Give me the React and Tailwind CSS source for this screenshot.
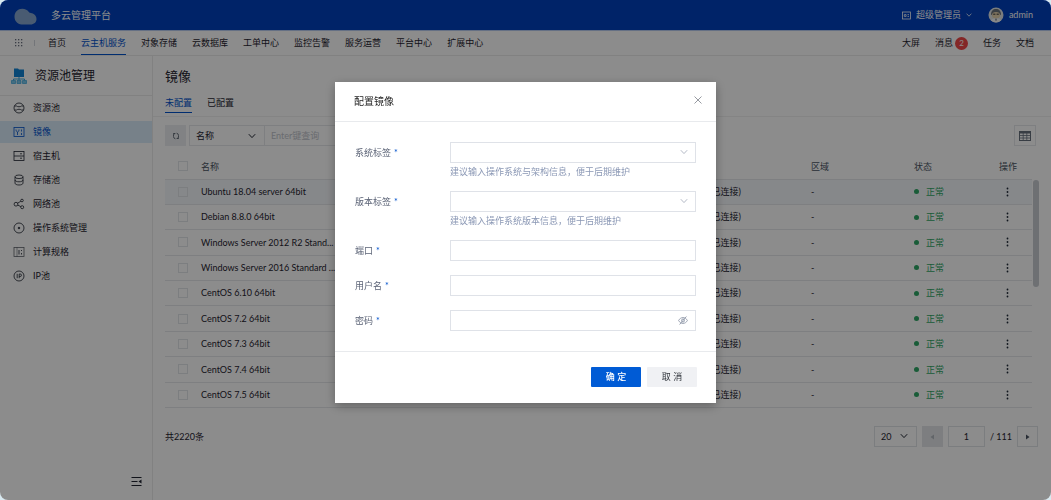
import { useState } from "react";

const leftNav = [
  "首页",
  "云主机服务",
  "对象存储",
  "云数据库",
  "工单中心",
  "监控告警",
  "服务运营",
  "平台中心",
  "扩展中心",
];

const rightNav = [
  { label: "大屏" },
  { label: "消息", badge: 2 },
  { label: "任务" },
  { label: "文档" },
];

const sideMenu = [
  { label: "资源池", icon: "pool" },
  { label: "镜像", icon: "image" },
  { label: "宿主机", icon: "host" },
  { label: "存储池", icon: "storage" },
  { label: "网络池", icon: "network" },
  { label: "操作系统管理", icon: "system" },
  { label: "计算规格", icon: "spec" },
  { label: "IP池", icon: "ip" },
];

const images = [
  "Ubuntu 18.04 server 64bit",
  "Debian 8.8.0 64bit",
  "Windows Server 2012 R2 Stand...",
  "Windows Server 2016 Standard ...",
  "CentOS 6.10 64bit",
  "CentOS 7.2 64bit",
  "CentOS 7.3 64bit",
  "CentOS 7.4 64bit",
  "CentOS 7.5 64bit",
];

const fields = [
  {
    id: "osTag",
    label: "系统标签",
    type: "select",
    hint: "建议输入操作系统与架构信息，便于后期维护",
  },
  {
    id: "versionTag",
    label: "版本标签",
    type: "select",
    hint: "建议输入操作系统版本信息，便于后期维护",
  },
  { id: "port", label: "端口", type: "text" },
  { id: "username", label: "用户名", type: "text" },
  { id: "password", label: "密码", type: "password" },
];

const iconPaths = {
  pool: (
    <>
      <circle cx="6" cy="6" r="5" />
      <path d="M1.500 4h2c1.200 1 3.800 1 5 0h2M1.500 8h2c1.200-1 3.800-1 5 0h2" />
    </>
  ),
  image: (
    <>
      <rect x="1" y="1.500" width="10" height="9" />
      <path d="M3 3.500v1.200l1.500 1.300v3M6 3.500v1.200L4.500 6M8.500 3.500v2M8.500 7v2" />
    </>
  ),
  host: (
    <>
      <rect x="1" y="1.500" width="10" height="9" />
      <path d="M1 6h10M7 3.800h2M7 8.200h2" />
    </>
  ),
  storage: (
    <>
      <ellipse cx="6" cy="2.800" rx="4" ry="1.800" />
      <path d="M2 2.800v6.400c0 1 1.800 1.800 4 1.800s4-.8 4-1.800V2.800M2 6c0 1 1.800 1.800 4 1.800S10 7 10 6" />
    </>
  ),
  network: (
    <>
      <circle cx="3" cy="6.200" r="1.900" />
      <circle cx="9" cy="2.500" r="1.300" />
      <circle cx="9.200" cy="9.200" r="1.500" />
      <path d="M4.600 5.200 7.900 3.200M4.700 7.100l3.200 1.500" />
    </>
  ),
  system: (
    <>
      <circle cx="6" cy="6" r="5" />
      <circle cx="6" cy="6" r="0.800" fill="currentColor" />
    </>
  ),
  spec: (
    <>
      <rect x="1" y="1.500" width="10" height="9" opacity="0.7" />
      <path d="M4 1.500v9" opacity="0.5" />
      <path d="M6 4v4.500M8.500 4v1M8.500 7v1.500" />
    </>
  ),
  ip: (
    <>
      <circle cx="6" cy="6" r="5" />
      <path d="M4.200 3.800v4.400M6.200 8.200V4h1a1.200 1.200 0 0 1 0 2.500h-1" />
    </>
  ),
};

function MenuIcon({ name }) {
  return (
    <svg
      viewBox="0 0 12 12"
      className="size-3 shrink-0"
      fill="none"
      stroke="currentColor"
      strokeWidth="0.8"
    >
      {iconPaths[name]}
    </svg>
  );
}

function Chevron({ className }) {
  return (
    <svg
      viewBox="0 0 8 8"
      className={className}
      fill="none"
      stroke="currentColor"
      strokeWidth="1"
    >
      <path d="M0.800 2.200 4 5.600 7.200 2.200" />
    </svg>
  );
}

function TopBar() {
  return (
    <header className="flex h-[30px] items-center justify-between bg-[#0041bd] pr-[18px] pl-[14px] text-white">
      <div className="flex items-center gap-[14px]">
        <svg viewBox="0 0 23 17" className="mt-[3px] h-[17px] w-[23px]">
          <path
            d="M7.500 16.500C3.500 16.200.5 13 .5 8.800.5 4 4 .8 8.200.8c3 0 5.400 1.300 7 3.600 1 .5 2.300.6 3.600 1.200 2.300 1 3.700 3 3.700 5.400 0 3.200-2.500 5.500-6 5.500z"
            fill="#86a6cf"
          />
        </svg>
        <span className="text-[10px]">多云管理平台</span>
      </div>
      <div className="flex items-center gap-4">
        <button type="button" className="flex items-center gap-[5px]">
          <svg
            viewBox="0 0 9 9"
            className="size-[9px]"
            fill="none"
            stroke="currentColor"
            strokeWidth="0.8"
          >
            <rect x="0.500" y="1" width="8" height="7" />
            <path d="M2.300 3.600h1.800v1.800H2.300zM5.500 3.600h1.500M5.500 5.400h1.500" />
          </svg>
          <span>超级管理员</span>
          <Chevron className="size-[6px]" />
        </button>
        <button type="button" className="flex items-center gap-[5px]">
          <svg viewBox="0 0 16 16" className="size-4">
            <circle cx="8" cy="8" r="7.500" fill="#dfe3e6" />
            <path d="M3 7.500C3 4 5 2 8 2s5 2 5 5.500l-1.500 1h-7z" fill="#6a737c" />
            <ellipse cx="8" cy="8.200" rx="4" ry="3.200" fill="#e6d3ae" />
            <path d="M5.200 7.200h2.200M8.600 7.200h2.200" stroke="#333" strokeWidth="1" />
            <path d="M3 13.600c1-2 2.800-2.200 5-2.200s4 .2 5 2.200a7.500 7.500 0 0 1-10 0z" fill="#f5f7f9" />
            <path d="M7.600 11.400h.8l.3 2.200H7.300z" fill="#55606b" />
          </svg>
          <span>admin</span>
        </button>
      </div>
    </header>
  );
}

function NavBar() {
  return (
    <nav className="flex h-[26px] items-stretch justify-between border-t border-b border-t-[#b9cdf0] border-b-[#ececec] pr-[17px] pl-[15px]">
      <div className="flex items-stretch gap-[13px]">
        <button type="button" aria-label="全部服务" className="flex items-center gap-[11px]">
          <svg viewBox="0 0 8 8" className="size-2" fill="#6b7280">
            {[0, 3, 6].map((y) =>
              [0, 3, 6].map((x) => (
                <rect key={`${x}-${y}`} x={x} y={y} width="1.300" height="1.300" />
              ))
            )}
          </svg>
          <span className="h-[6px] w-px bg-gray-300" />
        </button>
        <div className="flex items-stretch gap-[15px]">
          {leftNav.map((item) => (
            <a
              key={item}
              href="#"
              className={
                item === "云主机服务"
                  ? "flex items-center border-b border-[#0052cc] text-[#0052cc]"
                  : "flex items-center border-b border-transparent"
              }
            >
              {item}
            </a>
          ))}
        </div>
      </div>
      <div className="flex items-stretch gap-[15px]">
        {rightNav.map((item) => (
          <a key={item.label} href="#" className="flex items-center gap-[2px]">
            {item.label}
            {item.badge && (
              <span className="flex size-[13px] items-center justify-center rounded-full bg-[#f04848] text-[8px] text-white">
                {item.badge}
              </span>
            )}
          </a>
        ))}
      </div>
    </nav>
  );
}

function Sidebar() {
  return (
    <aside className="flex w-[153px] shrink-0 flex-col border-r border-[#ececec]">
      <div className="flex h-[40px] items-center gap-2 border-b border-[#ececec] pl-[11px]">
        <svg viewBox="0 0 16 16" className="size-4">
          <path d="M3 .5h4l1 1h5v7.500H3z" fill="#1283d6" />
          <path d="M8 9v3M2.500 12.500V11h11v1.500" stroke="#38a7e0" fill="none" />
          <path
            d="M.5 12.500h4v3h-4zM6 12.500h4v3H6zM11.500 12.500h4v3h-4z"
            fill="#7cc6ea"
            stroke="#38a7e0"
            strokeWidth="0.700"
          />
        </svg>
        <h2 className="text-[12px]">资源池管理</h2>
      </div>
      <ul className="flex flex-1 flex-col gap-[2px] pt-px">
        {sideMenu.map((item) => (
          <li key={item.label}>
            <a
              href="#"
              className={
                item.label === "镜像"
                  ? "flex h-[22px] items-center gap-2 bg-[#d9ebfa] pl-[13px] text-[#0052cc]"
                  : "flex h-[22px] items-center gap-2 pl-[13px]"
              }
            >
              <MenuIcon name={item.icon} />
              {item.label}
            </a>
          </li>
        ))}
      </ul>
      <button type="button" aria-label="收起菜单" className="mr-[10px] mb-[13px] self-end">
        <svg
          viewBox="0 0 11 11"
          className="size-[11px]"
          fill="none"
          stroke="currentColor"
          strokeWidth="1"
        >
          <path d="M.5 1.500h10M.5 5.500h6M.5 9.500h10" />
          <path d="M10.500 3.500v4l-3-2z" fill="currentColor" stroke="none" />
        </svg>
      </button>
    </aside>
  );
}

function Toolbar() {
  return (
    <div className="flex items-center justify-between pt-2 pr-[15px]">
      <div className="flex items-center gap-[3px]">
        <button
          type="button"
          aria-label="刷新"
          className="flex size-[21px] items-center justify-center bg-[#ebedf0]"
        >
          <svg
            viewBox="0 0 8 8"
            className="size-2"
            fill="none"
            stroke="#5b6470"
            strokeWidth="0.900"
          >
            <path d="M3.400 6.800A2.300 2.300 0 0 1 1.500 4.500V3A1.500 1.500 0 0 1 3 1.500M4.600 1.200A2.300 2.300 0 0 1 6.500 3.500V5A1.500 1.500 0 0 1 5 6.500M1.200 1.500H3.400M4.600 6.500h2.200" />
          </svg>
        </button>
        <div className="flex h-[21px] w-[260px] border border-[#e6e8eb]">
          <div className="relative w-[75px] border-r border-[#e6e8eb]">
            <select aria-label="查询字段" className="h-full w-full appearance-none pl-[6px]">
              <option>名称</option>
            </select>
            <Chevron className="pointer-events-none absolute top-[6px] right-2 size-2" />
          </div>
          <input
            aria-label="查询"
            placeholder="Enter键查询"
            className="min-w-0 flex-1 px-[6px] placeholder:text-[#bfc4cc]"
          />
        </div>
      </div>
      <button
        type="button"
        aria-label="列设置"
        className="flex h-[21px] w-[22px] items-center justify-center border border-[#e6e8eb]"
      >
        <svg viewBox="0 0 12 10" className="h-[10px] w-3" fill="none" stroke="#66707d">
          <rect x="0.500" y="0.500" width="11" height="9" />
          <path d="M.5 1.500h11" strokeWidth="2" />
          <path d="M.5 4.500h11M.5 7h11M4.200 2v7.500M7.800 2v7.500" strokeWidth="0.800" />
        </svg>
      </button>
    </div>
  );
}

function ImageTable() {
  const checkbox = (label) => (
    <input
      type="checkbox"
      aria-label={label}
      className="block size-[10px] appearance-none border border-[#e2e5e9]"
    />
  );

  return (
    <div className="flex gap-px pt-2 pr-3">
      <table className="h-[254px] flex-1 table-fixed border-collapse text-left">
        <colgroup>
          <col className="w-[36px]" />
          <col />
          <col className="w-[102px]" />
          <col className="w-[103px]" />
          <col className="w-[85px]" />
          <col className="w-[33px]" />
        </colgroup>
        <thead>
          <tr className="h-[25px] border-b border-[#e6e8eb] text-[#4b5563]">
            <th className="pl-[13px]">{checkbox("全选")}</th>
            <th className="font-normal">名称</th>
            <th />
            <th className="font-normal">区域</th>
            <th className="font-normal">状态</th>
            <th className="font-normal">操作</th>
          </tr>
        </thead>
        <tbody>
          {images.map((name, i) => (
            <tr
              key={name}
              className={
                i === 0
                  ? "border-b border-[#e6e8eb] bg-[#f5f8fc]"
                  : "border-b border-[#e6e8eb]"
              }
            >
              <td className="pl-[13px]">{checkbox(name)}</td>
              <td>{name}</td>
              <td>(已连接)</td>
              <td>-</td>
              <td className="text-[#2fa866]">
                <span className="flex items-center gap-[7px]">
                  <span className="size-[5px] rounded-full bg-[#2fa866]" />
                  正常
                </span>
              </td>
              <td>
                <button type="button" aria-label="操作" className="block pl-[7px]">
                  <svg viewBox="0 0 3 10" className="h-[10px] w-[3px]" fill="#1f2937">
                    <circle cx="1.500" cy="1.500" r="0.900" />
                    <circle cx="1.500" cy="5" r="0.900" />
                    <circle cx="1.500" cy="8.500" r="0.900" />
                  </svg>
                </button>
              </td>
            </tr>
          ))}
        </tbody>
      </table>
      <div className="mt-[26px] h-[107px] w-[6px] rounded-full bg-[#c9ccd1]" />
    </div>
  );
}

function Pagination() {
  return (
    <div className="flex items-center justify-between pt-[18px] pr-[13px]">
      <span>共2220条</span>
      <div className="flex h-[21px] items-stretch gap-[5px]">
        <div className="relative w-[43px]">
          <select
            aria-label="每页条数"
            className="h-full w-full appearance-none border border-[#e0e3e7] pl-[6px]"
          >
            <option>20</option>
          </select>
          <Chevron className="pointer-events-none absolute top-[6px] right-[9px] size-2" />
        </div>
        <button
          type="button"
          aria-label="上一页"
          disabled
          className="flex w-[21px] items-center justify-center bg-[#e3e6e9]"
        >
          <svg viewBox="0 0 4 6" className="h-[6px] w-1" fill="#b3b9c0">
            <path d="M4 .5v5L.5 3z" />
          </svg>
        </button>
        <input
          aria-label="页码"
          defaultValue="1"
          className="w-[37px] border border-[#e0e3e7] text-center"
        />
        <span className="flex items-center">/ 111</span>
        <button
          type="button"
          aria-label="下一页"
          className="flex w-[21px] items-center justify-center border border-[#e0e3e7]"
        >
          <svg viewBox="0 0 4 6" className="h-[6px] w-1" fill="#4b5563">
            <path d="M0 .5v5L3.500 3z" />
          </svg>
        </button>
      </div>
    </div>
  );
}

function FieldControl({ field }) {
  const box = "h-[21px] w-full border border-[#dfe2e8] bg-white px-2";

  if (field.type === "select") {
    return (
      <div className="relative">
        <select id={field.id} defaultValue="" className={`${box} appearance-none`}>
          <option value="" />
        </select>
        <Chevron className="pointer-events-none absolute top-[6px] right-2 size-2 text-[#b4bac6]" />
      </div>
    );
  }

  return (
    <div className="relative">
      <input id={field.id} type={field.type} className={box} />
      {field.type === "password" && (
        <button
          type="button"
          aria-label="显示密码"
          className="absolute top-[6px] right-2 text-[#8f97a8]"
        >
          <svg
            viewBox="0 0 10 9"
            className="h-[9px] w-[10px]"
            fill="none"
            stroke="currentColor"
            strokeWidth="0.900"
          >
            <path d="M.6 4.500C1.600 2.600 3.200 1.600 5 1.600s3.400 1 4.400 2.900C8.400 6.400 6.800 7.400 5 7.400S1.600 6.400.6 4.500z" />
            <circle cx="5" cy="4.500" r="1.500" />
            <path d="M1.600 8.500 8.400.5" />
          </svg>
        </button>
      )}
    </div>
  );
}

function ConfigDialog({ onClose }) {
  return (
    <div className="fixed inset-0 flex items-start justify-center rounded-lg bg-black/45 pt-[82px]">
      <div
        role="dialog"
        aria-labelledby="dialogTitle"
        className="w-[381px] bg-white shadow-[0_3px_10px_rgba(0,0,0,0.3)]"
      >
        <div className="flex h-[40px] items-center justify-between border-b border-[#e8eaed] pr-[14px] pl-[19px]">
          <h3 id="dialogTitle" className="text-[10px] text-[#262626]">
            配置镜像
          </h3>
          <button type="button" aria-label="关闭" onClick={onClose}>
            <svg
              viewBox="0 0 8 8"
              className="mb-1 size-2"
              fill="none"
              stroke="#8b8f96"
              strokeWidth="0.900"
            >
              <path d="M.5.5l7 7M7.500.5l-7 7" />
            </svg>
          </button>
        </div>

        <form className="flex flex-col gap-[14px] p-5">
          {fields.map((field) => (
            <div key={field.id} className="flex">
              <label
                htmlFor={field.id}
                className="flex h-[21px] w-[95px] shrink-0 items-center gap-[3px] text-[#5a6275]"
              >
                {field.label}
                <span className="text-[#0052cc]">*</span>
              </label>
              <div className="flex-1">
                <FieldControl field={field} />
                {field.hint && (
                  <p className="pt-[3px] leading-[11px] text-[#8b98b5]">{field.hint}</p>
                )}
              </div>
            </div>
          ))}
        </form>

        <div className="flex justify-end gap-[6px] border-t border-[#e8eaed] pt-[15px] pr-[19px] pb-4">
          <button
            type="button"
            className="h-[20px] w-[50px] rounded-[1px] bg-[#005bd5] font-medium text-white"
          >
            确 定
          </button>
          <button
            type="button"
            onClick={onClose}
            className="h-[20px] w-[50px] rounded-[1px] bg-[#f0f1f4] text-[#30343b]"
          >
            取 消
          </button>
        </div>
      </div>
    </div>
  );
}

export default function App() {
  const [open, setOpen] = useState(true);

  return (
    <div className="bg-[#d8e9f0] font-['Lato','Noto_Sans_CJK_SC',sans-serif] text-[9px] text-[#1f2430]">
      <div className="flex min-h-screen flex-col overflow-hidden rounded-lg bg-white">
        <TopBar />
        <NavBar />
        <div className="flex flex-1">
          <Sidebar />
          <main className="min-w-0 flex-1">
            <div className="border-b border-[#f0f0f0] pl-3">
              <h1 className="pt-[10px] text-[13px] leading-5">镜像</h1>
              <div role="tablist" className="flex gap-[15px] pt-[7px] pb-[3px]">
                <button
                  type="button"
                  role="tab"
                  aria-selected="true"
                  className="h-[20px] border-b border-[#0052cc] text-[#0052cc]"
                >
                  未配置
                </button>
                <button
                  type="button"
                  role="tab"
                  aria-selected="false"
                  className="h-[20px] border-b border-transparent"
                >
                  已配置
                </button>
              </div>
            </div>
            <div className="pl-3">
              <Toolbar />
              <ImageTable />
              <Pagination />
            </div>
          </main>
        </div>
      </div>
      {open && <ConfigDialog onClose={() => setOpen(false)} />}
    </div>
  );
}
